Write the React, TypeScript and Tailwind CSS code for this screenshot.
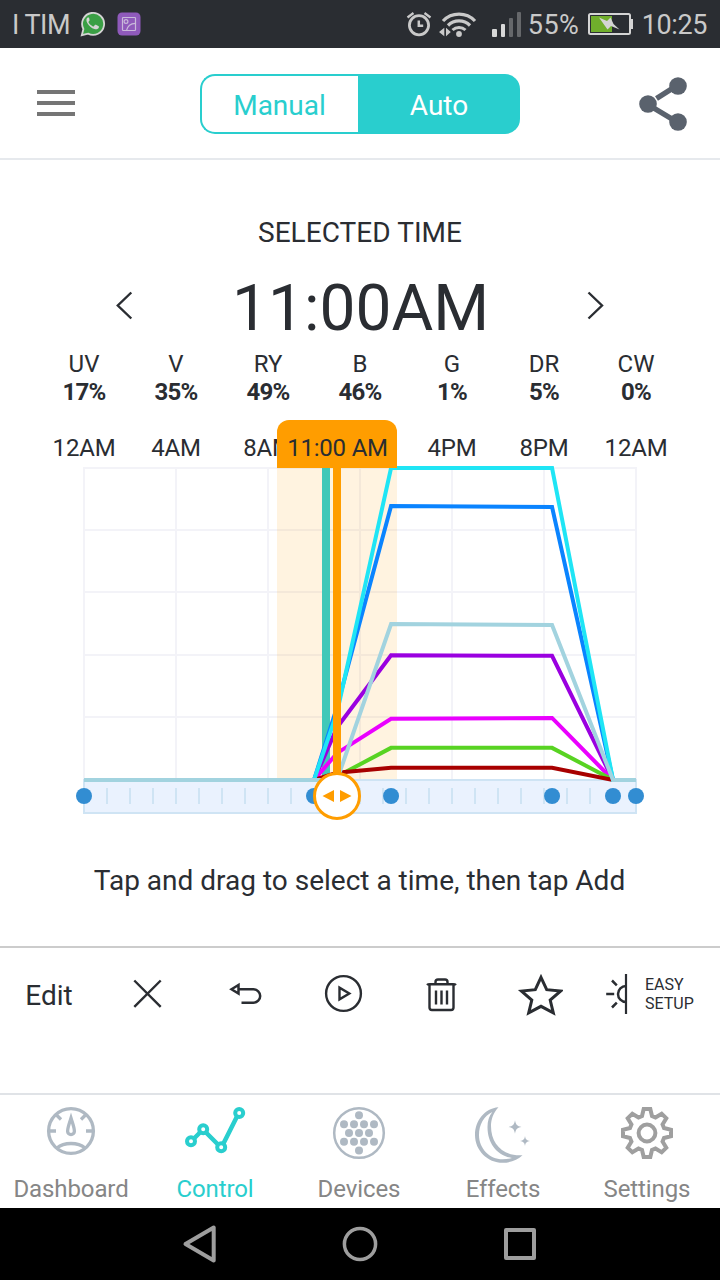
import type { ReactNode } from 'react';

const channels = [
  { name: 'UV', value: 17 },
  { name: 'V', value: 35 },
  { name: 'RY', value: 49 },
  { name: 'B', value: 46 },
  { name: 'G', value: 1 },
  { name: 'DR', value: 5 },
  { name: 'CW', value: 0 },
];

// noon stays empty, the selected time badge sits there
const hourLabels = ['12AM', '4AM', '8AM', '', '4PM', '8PM', '12AM'];

// levels at 11:00, 13:20 and 20:20, in percent
const curves = [
  { color: '#0a84ff', levels: [23.4, 87.8, 87.5] },
  { color: '#9a00e0', levels: [16.8, 40, 39.8] },
  { color: '#ea00ff', levels: [8.6, 19.6, 19.9] },
  { color: '#58d322', levels: [1.1, 10.3, 10.3] },
  { color: '#a80000', levels: [2.3, 3.9, 3.9] },
  { color: '#1fe5f5', levels: [21.6, 100, 100] },
  { color: '#a2d3df', levels: [0, 50, 49.7] },
];

const points = [0, 10, 13.35, 20.35, 23, 24];

const toX = (hour: number) => 46 + hour * 23;
const toY = (level: number) => 316 - level * 3.12;

function curvePath(levels: number[]) {
  const steps = [
    [0, 0],
    [10, 0],
    [11, levels[0]],
    [13.35, levels[1]],
    [20.35, levels[2]],
    [23, 0],
    [24, 0],
  ];
  return steps.map(([hour, level]) => `${toX(hour)},${toY(level)}`).join(' ');
}

function gearPoints() {
  const tooth = [
    [17, -5],
    [24, -3.3],
    [24, 3.3],
    [17, 5],
  ];
  const result: string[] = [];
  for (let i = 0; i < 8; i++) {
    const a = (i * Math.PI) / 4;
    tooth.forEach(([r, t]) => {
      const x = 29 + r * Math.cos(a) - t * Math.sin(a);
      const y = 30 + r * Math.sin(a) + t * Math.cos(a);
      result.push(`${x.toFixed(2)},${y.toFixed(2)}`);
    });
  }
  return result.join(' ');
}

function StatusBar() {
  return (
    <div className="flex h-12 items-center bg-[#2a2d32] pr-[13px] pl-3 text-[27px] text-[#c9c9c9]">
      <span className="w-[68px] pt-[3px] tracking-[-0.5px] whitespace-nowrap">I TIM</span>
      <svg className="h-[26px] w-[26px]" viewBox="0 0 26 26">
        <path d="M1.800 24.200 3.400 18A11 11 0 1 1 8 22.600Z" fill="#3a9f45" stroke="#d4d4d4" strokeWidth="1.800" />
        <path
          d="M9.1 6.800c-.5-.6-1.200-.5-1.700 0-1.400 1.400-1.200 3.200-.1 5.100 1.600 2.900 4.100 5.100 7.200 6.200 1.900.7 4-.1 4.400-1.900.1-.6 0-.9-.6-1.200l-2.400-1.200c-.5-.2-.8-.1-1.100.3l-.9 1.100c-.3.3-.6.3-1 .2-1.900-.8-3.300-2-4.300-3.800-.2-.4-.2-.7.1-1l.7-.9c.2-.3.3-.6.1-1Z"
          fill="#d4d4d4"
        />
      </svg>
      <svg className="ml-[11px] h-6 w-6" viewBox="0 0 24 24" fill="none" stroke="#c9b9da" strokeWidth="1.200">
        <rect x="0.500" y="0.500" width="23" height="23" rx="4.500" fill="#8f5abb" stroke="none" />
        <rect x="5.500" y="5.500" width="13" height="13" rx="0.800" />
        <circle cx="9" cy="9.500" r="1.900" />
        <path d="M9.500 18.500c1-4.500 4-7 9-7.200" />
      </svg>

      <div className="ml-auto flex items-center">
        <svg className="h-[26px] w-[26px]" viewBox="0 0 26 26" fill="none" stroke="#c9c9c9" strokeWidth="2.800">
          <circle cx="13" cy="14.200" r="9.600" />
          <path d="M12.800 9.500v5.300h4.400" strokeWidth="2.500" />
          <path d="M1.500 6.500 7.500 2M24.500 6.500 18.500 2" strokeWidth="2.300" />
        </svg>
        <svg className="ml-1.5 h-[26px] w-[40px]" viewBox="0 0 40 26" fill="none" stroke="#c9c9c9">
          <path d="M5 10a22 22 0 0 1 32 0" strokeWidth="3.200" />
          <path d="M10 14.500a15.500 15.500 0 0 1 22 0" strokeWidth="3.200" />
          <path d="M14.500 19a9.500 9.500 0 0 1 13 0" strokeWidth="3" />
          <circle cx="21" cy="23" r="2.900" fill="#c9c9c9" stroke="none" />
          <path d="M1 21 6.300 16.800v8.400ZM12.800 21 8 16.800v8.400Z" fill="#c9c9c9" stroke="none" />
        </svg>
        <svg className="ml-[13px] h-[26px] w-[30px]" viewBox="0 0 30 26" fill="#d8d8d8">
          <rect x="1" y="18" width="5" height="8" rx="1" />
          <rect x="10" y="13" width="4" height="13" rx="1" />
          <rect x="18" y="7" width="4" height="19" rx="1" fill="#66686b" />
          <rect x="26" y="1" width="4" height="25" rx="1" fill="#66686b" />
        </svg>
        <span className="ml-[7px] w-[60px] pt-[3px] tracking-[0.5px]">55%</span>
        <svg className="h-6 w-[46px]" viewBox="0 0 46 24">
          <rect x="1" y="2" width="41" height="20" rx="1.500" fill="none" stroke="#d4d4d4" strokeWidth="2" />
          <rect x="3" y="4" width="21" height="16" fill="#70ae2c" />
          <rect x="43" y="7" width="2" height="10" fill="#d4d4d4" />
          <path d="M11 5.500 19 9 22.500 5.500 25.500 12 31.500 17.500 23 14 19.500 17.500Z" fill="#d4d4d4" />
        </svg>
        <span className="ml-2 pt-[3px] tracking-[-0.4px] whitespace-nowrap">10:25</span>
      </div>
    </div>
  );
}

function Header() {
  return (
    <header className="flex h-28 items-center justify-between border-b-2 border-[#e6e9ed] pr-[32px] pl-[37px]">
      <button type="button" className="mb-[1px] flex w-[38px] flex-col gap-[7px]">
        <span className="h-1 bg-[#757575]" />
        <span className="h-1 bg-[#757575]" />
        <span className="h-1 bg-[#757575]" />
      </button>
      <div className="mt-[1px] mr-[-6px] flex h-[60px] w-80 shrink-0 text-[28px]">
        <button
          type="button"
          className="w-[158px] rounded-l-[15px] border-2 border-r-0 border-[#29cece] pt-[5px] text-[#29cece]"
        >
          Manual
        </button>
        <button type="button" className="flex-1 rounded-r-[15px] bg-[#29cece] pt-[5px] pl-px text-white">
          Auto
        </button>
      </div>
      <svg className="mt-[2px] h-14 w-[50px]" viewBox="0 0 50 56" fill="#5a626d" stroke="#5a626d">
        <path d="M39 9.500 18.500 22.500M9 28 39 46" strokeWidth="5.500" />
        <circle cx="40" cy="10" r="8.800" stroke="none" />
        <circle cx="10" cy="28" r="8.800" stroke="none" />
        <circle cx="40" cy="46" r="8.800" stroke="none" />
      </svg>
    </header>
  );
}

function ScheduleChart() {
  return (
    <div className="relative mx-[38px]">
      <div className="grid h-[58px] grid-cols-7 items-center text-center text-[24px]">
        {hourLabels.map((label, index) => (
          <span key={index} className="pt-6 tracking-[-0.2px]">
            {label}
          </span>
        ))}
      </div>
      <svg className="block h-[360px] w-[644px]" viewBox="0 0 644 360" fill="none">
        <g stroke="#f3f3f8" strokeWidth="2">
          {[0, 20, 40, 60, 80, 100].map((level) => (
            <line
              key={level}
              x1={toX(0) - 1}
              x2={toX(24) + 1}
              y1={Math.floor(toY(level))}
              y2={Math.floor(toY(level))}
            />
          ))}
          {[0, 4, 8, 12, 16, 20, 24].map((hour) => (
            <line key={hour} x1={toX(hour)} x2={toX(hour)} y1={toY(100)} y2={toY(0)} />
          ))}
        </g>
        <rect x="239" y="4" width="120" height="312" fill="#ff9d00" fillOpacity="0.120" />

        <rect x="46" y="316" width="552" height="33" fill="#eaf2fe" stroke="#cfe4f4" strokeWidth="2" />
        {Array.from({ length: 23 }, (_, i) => (
          <line key={i} x1={toX(i + 1)} x2={toX(i + 1)} y1="324" y2="340" stroke="#cfe4f4" strokeWidth="2" />
        ))}
        {points.map((hour) => (
          <circle key={hour} cx={toX(hour)} cy="332" r="8" fill="#328dd2" />
        ))}

        <rect x="284" y="4" width="8" height="310" fill="#41c8b8" />
        {curves.map((curve) => (
          <polyline key={curve.color} points={curvePath(curve.levels)} stroke={curve.color} strokeWidth="4" />
        ))}
        <rect x="295" y="4" width="8" height="308" fill="#ff9d00" />
        <circle cx="299" cy="332" r="22.500" fill="#fff" stroke="#ff9d00" strokeWidth="3" />
        <path d="M284.500 332 296 326v12ZM313.500 332 302 326v12Z" fill="#ff9d00" />
      </svg>
      <div className="absolute top-[14px] left-[239px] h-12 w-[120px] rounded-t-xl bg-[#ff9d00] pl-px text-center text-[24px] leading-[56px] tracking-[-0.2px] whitespace-nowrap">
        11:00 AM
      </div>
    </div>
  );
}

function Tool({ children }: { children: ReactNode }) {
  return (
    <button type="button" className="flex items-center justify-center">
      {children}
    </button>
  );
}

function Toolbar() {
  return (
    <div className="grid h-[147px] grid-cols-[98px_98px_98px_98px_98px_98px_132px] grid-rows-[92px] border-t-2 border-[#cccccc]">
      <Tool>
        <span className="pt-[3px] text-[28px]">Edit</span>
      </Tool>
      <Tool>
        <svg className="h-12 w-12" viewBox="0 0 48 48" fill="none" stroke="#2a2d32" strokeWidth="2.400">
          <path d="m11.300 10.500 26.400 26.400M37.700 10.500 11.300 36.900" />
        </svg>
      </Tool>
      <Tool>
        <svg className="h-12 w-12" viewBox="0 0 48 48" fill="none" stroke="#2a2d32" strokeWidth="2.500">
          <path d="M18 19.300H32.500a6.700 6.700 0 0 1 0 13.400H20.500" />
          <path d="M10.500 19.300 17.500 15v8.600Z" />
        </svg>
      </Tool>
      <Tool>
        <svg className="h-12 w-12" viewBox="0 0 48 48" fill="none" stroke="#2a2d32" strokeWidth="2.400">
          <circle cx="24.500" cy="23.500" r="17.400" />
          <path d="M20.500 17.700v11.600l9.800-5.800Z" />
        </svg>
      </Tool>
      <Tool>
        <svg className="h-12 w-12" viewBox="0 0 48 48" fill="none" stroke="#2a2d32" strokeWidth="2.400">
          <path d="M12.500 15v22.500a2.500 2.500 0 0 0 2.500 2.500h19a2.500 2.500 0 0 0 2.500-2.500V15" />
          <path d="M10 15c.8-.8 2-.8 3-.8h23c1 0 2.200 0 3 .8M18.500 14v-2a2.500 2.500 0 0 1 2.500-2.500h7a2.500 2.500 0 0 1 2.500 2.500v2" />
          <path d="M19 20.500v14M24.500 20.500v14M30 20.500v14" />
        </svg>
      </Tool>
      <Tool>
        <svg className="h-12 w-12" viewBox="0 0 48 48" fill="none" stroke="#2a2d32" strokeWidth="3">
          <path d="m26 7.300 5.700 12.400 13.800 1.400-10.300 9 3.100 12.700L26 36.300l-12.300 6.500 3.100-12.700-10.300-9 13.800-1.400Z" />
        </svg>
      </Tool>
      <button type="button" className="flex items-center pl-[17px]">
        <svg className="h-10 w-[24px]" viewBox="0 0 24 40" fill="none" stroke="#2a2d32">
          <path d="M21 0v40" strokeWidth="2.200" />
          <path d="M21 12a8 8 0 0 0 0 16" strokeWidth="2.500" />
          <path d="M1.200 20h8M7 6.500l4.800 4.800M7 33.500l4.800-4.800" strokeWidth="2.500" />
        </svg>
        <span className="ml-[16px] -mt-px text-left text-[16px] leading-[19px]">
          EASY
          <br />
          SETUP
        </span>
      </button>
    </div>
  );
}

type NavItemProps = {
  label: string;
  active?: boolean;
  children: ReactNode;
};

function NavItem({ label, active, children }: NavItemProps) {
  return (
    <button type="button" className="flex w-36 flex-col items-center pt-2">
      <svg className="h-[60px] w-[60px] overflow-visible" viewBox="0 0 60 60" fill="none">
        {children}
      </svg>
      <span
        className={`mt-3 -ml-[2px] text-[24px] leading-7 tracking-[-0.1px] ${active ? 'text-[#29cece]' : 'text-[#868686]'}`}
      >
        {label}
      </span>
    </button>
  );
}

function BottomNav() {
  return (
    <nav className="flex h-[115px] border-t-2 border-[#e0e3e7]">
      <NavItem label="Dashboard">
        <g stroke="#afb9c3" strokeWidth="3.300">
          <circle cx="29" cy="28" r="22.400" />
          <path d="M15 45c7-6 21-6 28 0" />
          <path d="M6 28h8M44 28h8M14 11.500l5 5M44 11.500l-5 5" />
          <path d="M29 15c-2 6.500-3.400 10-3.400 13.200a3.400 3.400 0 0 0 6.800 0C32.400 25 31 21.500 29 15Z" />
        </g>
      </NavItem>
      <NavItem label="Control" active>
        <g stroke="#29cece" strokeWidth="4">
          <path d="m8 35.500 6-6M20 29.500l12.500 12.500M37.200 41 51 13.500" strokeWidth="4.500" />
          <circle cx="5" cy="38.300" r="4" />
          <circle cx="17.200" cy="26.300" r="4" />
          <circle cx="35.200" cy="44.300" r="4" />
          <circle cx="53.200" cy="10" r="4" />
        </g>
      </NavItem>
      <NavItem label="Devices">
        <circle cx="29" cy="30" r="24.800" stroke="#afb9c3" strokeWidth="2.500" />
        <g fill="#afb9c3">
          {[
            [29, 12.3],
            [14, 21.2],
            [24, 21.2],
            [34, 21.2],
            [44, 21.2],
            [19, 30],
            [29, 30],
            [39, 30],
            [14, 38.8],
            [24, 38.8],
            [34, 38.8],
            [44, 38.8],
            [29, 47.6],
          ].map(([cx, cy]) => (
            <circle key={`${cx}-${cy}`} cx={cx} cy={cy} r="4" />
          ))}
        </g>
      </NavItem>
      <NavItem label="Effects">
        <g fill="#afb9c3">
          <path
            fillRule="evenodd"
            d="M24.500 4.200C10.500 5.500 1 17.500 1 32c0 15.500 12.500 27.800 27.700 27.800 8 0 15-3 19.800-7.600C29 53.500 17 41 17 23c0-7 2.500-13.500 7.500-18.800ZM18.300 9C15 13 13.500 18 13.500 24c0 16.500 9.500 28.500 24.500 31-3 1-6 1.300-9.300 1.300C15.500 56.300 5 45.500 5 32 5 21.500 10 13 18.300 9Z"
          />
          <path d="M41 17.300c.8 4.500 2 5.800 6.500 6.700-4.500.9-5.700 2.200-6.500 6.700-.8-4.500-2-5.800-6.500-6.700 4.500-.9 5.700-2.200 6.500-6.700Z" />
          <path d="M51 33c.6 3.400 1.600 4.400 5 5-3.400.6-4.400 1.600-5 5-.6-3.400-1.600-4.400-5-5 3.400-.6 4.400-1.600 5-5Z" />
        </g>
      </NavItem>
      <NavItem label="Settings">
        <g stroke="#9f9f9f" strokeWidth="4">
          <polygon points={gearPoints()} />
          <circle cx="29" cy="30" r="8.400" />
        </g>
      </NavItem>
    </nav>
  );
}

function SystemNav() {
  return (
    <div className="flex h-[72px] items-center justify-center gap-[120px] bg-black">
      <svg className="h-10 w-10" viewBox="0 0 40 40" fill="none" stroke="#9e9e9e" strokeWidth="4" strokeLinejoin="round">
        <path d="M5.500 20 33.700 3.500v33Z" />
      </svg>
      <svg className="h-10 w-10" viewBox="0 0 40 40" fill="none" stroke="#9e9e9e" strokeWidth="3.500">
        <circle cx="20" cy="20" r="15.600" />
      </svg>
      <svg className="h-10 w-10" viewBox="0 0 40 40" fill="none" stroke="#9e9e9e" strokeWidth="4" strokeLinejoin="round">
        <rect x="6" y="6" width="28" height="28" />
      </svg>
    </div>
  );
}

export default function App() {
  return (
    <div className="flex h-[1280px] w-[720px] flex-col overflow-hidden bg-white font-[Roboto,sans-serif] text-[#2a2d32]">
      <StatusBar />
      <Header />
      <main className="flex-1 pt-[53px]">
        <h1 className="text-center text-[28px] leading-10 tracking-[0.050px]">SELECTED TIME</h1>
        <div className="mt-5 flex h-[72px] items-center justify-between pr-[108px] pl-[109px]">
          <svg className="-mt-2 h-8 w-8" viewBox="0 0 32 32" fill="none" stroke="#2a2d32" strokeWidth="2.400">
            <path d="M22.300 3.500 8.800 16.500l13.500 13" />
          </svg>
          <span className="text-[64px] leading-[72px]">11:00AM</span>
          <svg className="-mt-2 h-8 w-8" viewBox="0 0 32 32" fill="none" stroke="#2a2d32" strokeWidth="2.400">
            <path d="m8.500 3.500 13.500 13-13.500 13" />
          </svg>
        </div>
        <div className="mx-[38px] mt-[5px] grid grid-cols-7 text-center text-[24px] leading-7">
          {channels.map((channel) => (
            <div key={channel.name}>
              <p>{channel.name}</p>
              <p className="font-bold tracking-[-0.7px]">{channel.value}%</p>
            </div>
          ))}
        </div>
        <ScheduleChart />
        <p className="mt-[37px] -ml-px text-center text-[28px] leading-10">
          Tap and drag to select a time, then tap Add
        </p>
      </main>
      <Toolbar />
      <BottomNav />
      <SystemNav />
    </div>
  );
}
